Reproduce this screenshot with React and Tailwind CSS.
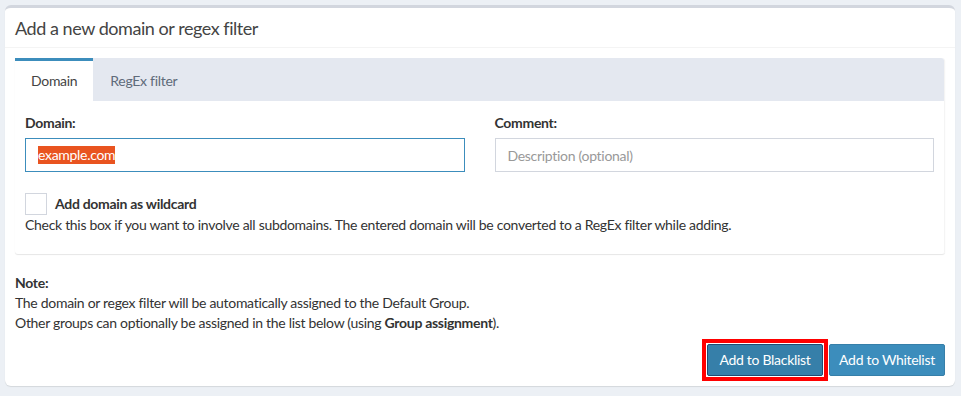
import React, { useState } from 'react';

const font = { fontFamily: 'Lato, "Open Sans", sans-serif' };

export default function App() {
  const [tab, setTab] = useState('domain');
  const [wildcard, setWildcard] = useState(false);

  return (
    <div className="min-h-screen bg-[#ecf0f5] pt-[5px] pl-[5px] pr-[6px] text-[14px] leading-[20px] tracking-[-0.3px] text-[#333]" style={font}>
      <div className="bg-white rounded-[6px] border-t-[3px] border-[#d2d6de] shadow-[0_1px_1px_rgba(0,0,0,0.1)]">
        <div className="px-[10px] h-[40px] flex items-center border-b border-[#f4f4f4]">
          <h3 className="text-[18px] leading-[20px] tracking-[-0.45px] text-[#444]">Add a new domain or regex filter</h3>
        </div>

        <div className="p-[10px]">
          <div className="rounded-[3px] shadow-[0_1px_1px_rgba(0,0,0,0.1)] mb-[19px] border-r border-[#f4f4f4]">
            <div className="flex bg-[#e4e8f0] rounded-t-[3px] h-[43px]">
              <button
                onClick={() => setTab('domain')}
                className={`px-[16px] border-t-[3px] text-[14px] ${tab === 'domain' ? 'bg-white border-[#3c8dbc] text-[#444]' : 'border-transparent text-[#5f6b7a]'}`}
              >
                Domain
              </button>
              <button
                onClick={() => setTab('regex')}
                className={`px-[17px] border-t-[3px] text-[14px] ${tab === 'regex' ? 'bg-white border-[#3c8dbc] text-[#444]' : 'border-transparent text-[#5f6b7a]'}`}
              >
                RegEx filter
              </button>
            </div>

            <div className="p-[10px] pt-[12px]">
              <div className="grid grid-cols-2 gap-[30px]">
                <div>
                  <label className="block font-bold mb-[5px]">{tab === 'domain' ? 'Domain:' : 'RegEx filter:'}</label>
                  <div className="h-[34px] border border-[#3c8dbc] px-[12px] flex items-center">
                    <span className="bg-[#e95420] text-white leading-[18px]">example.com</span>
                  </div>
                </div>
                <div>
                  <label className="block font-bold mb-[5px]">Comment:</label>
                  <input
                    className="w-full h-[34px] border border-[#d2d6de] px-[12px] outline-none placeholder:text-[#999]"
                    placeholder="Description (optional)"
                  />
                </div>
              </div>

              <div className="mt-[21px]">
                <div className="flex items-center gap-[8px]">
                  <button
                    onClick={() => setWildcard(!wildcard)}
                    className="w-[22px] h-[22px] border border-[#d2d6de] bg-white flex items-center justify-center"
                  >
                    {wildcard && <span className="text-[#3c8dbc] text-[14px]">✓</span>}
                  </button>
                  <span className="font-bold">Add domain as wildcard</span>
                </div>
                <p className="mb-[9px]">Check this box if you want to involve all subdomains. The entered domain will be converted to a RegEx filter while adding.</p>
              </div>
            </div>
          </div>

          <p className="font-bold">Note:</p>
          <p>The domain or regex filter will be automatically assigned to the Default Group.</p>
          <p>Other groups can optionally be assigned in the list below (using <strong>Group assignment</strong>).</p>

          <div className="flex justify-end items-center gap-[6px] mt-[11px]">
            <span className="flex outline-[4px] outline-solid outline-[#ff0000] outline-offset-[1px]">
              <button className="h-[32px] w-[116px] bg-[#367fa9] border border-[#204d74] text-white rounded-[2px]">
                Add to Blacklist
              </button>
            </span>
            <button className="h-[32px] w-[116px] bg-[#3c8dbc] border border-[#367fa9] text-white rounded-[2px]">
              Add to Whitelist
            </button>
          </div>
        </div>
      </div>
    </div>
  );
}
